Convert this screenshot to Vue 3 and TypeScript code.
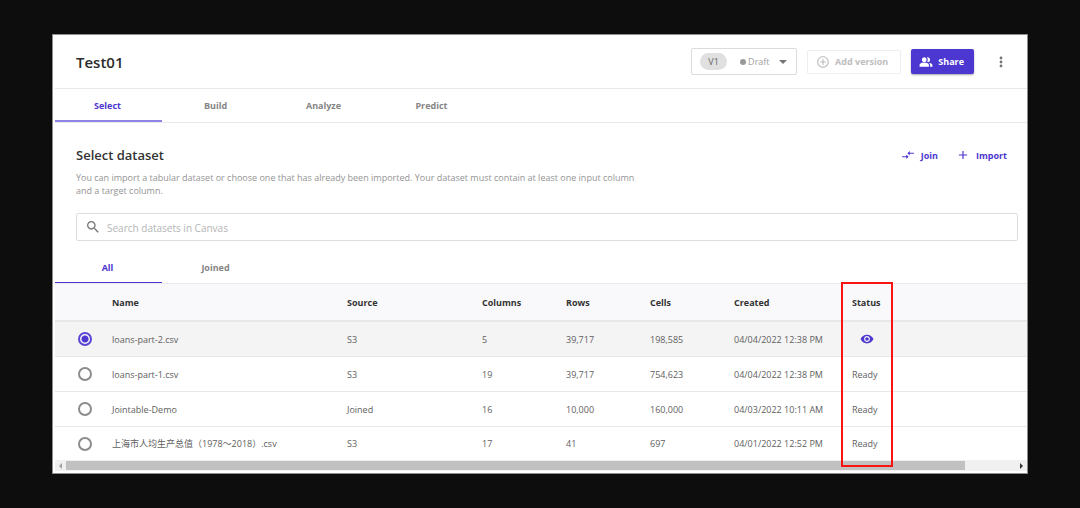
<script setup lang="ts">
import { ref } from 'vue'

interface Dataset {
  name: string
  source: string
  columns: string
  rows: string
  cells: string
  created: string
}

const steps = ['Select', 'Build', 'Analyze', 'Predict']
const filters = ['All', 'Joined']
const headings = ['Name', 'Source', 'Columns', 'Rows', 'Cells', 'Created', 'Status']

const datasets: Dataset[] = [
  { name: 'loans-part-2.csv', source: 'S3', columns: '5', rows: '39,717', cells: '198,585', created: '04/04/2022 12:38 PM' },
  { name: 'loans-part-1.csv', source: 'S3', columns: '19', rows: '39,717', cells: '754,623', created: '04/04/2022 12:38 PM' },
  { name: 'Jointable-Demo', source: 'Joined', columns: '16', rows: '10,000', cells: '160,000', created: '04/03/2022 10:11 AM' },
  { name: '上海市人均生产总值（1978～2018）.csv', source: 'S3', columns: '17', rows: '41', cells: '697', created: '04/01/2022 12:52 PM' },
]

const step = ref('Select')
const filter = ref('All')
const selected = ref('loans-part-2.csv')
const query = ref('')
</script>

<template>
  <div class="backdrop">
    <main class="panel">
      <header class="header">
        <h1>Test01</h1>
        <div class="actions">
          <button type="button" class="version">
            <span class="chip">V1</span>
            <span class="dot"></span>
            <span class="draft">Draft</span>
            <svg class="caret" viewBox="0 0 8 4"><path d="M0 0h8L4 4z" fill="currentColor" /></svg>
          </button>
          <button type="button" class="add" disabled>
            <svg class="icon" viewBox="0 0 24 24">
              <path d="M13 7h-2v4H7v2h4v4h2v-4h4v-2h-4V7zm-1-5C6.48 2 2 6.48 2 12s4.48 10 10 10 10-4.48 10-10S17.52 2 12 2zm0 18c-4.41 0-8-3.59-8-8s3.59-8 8-8 8 3.59 8 8-3.59 8-8 8z" fill="currentColor" />
            </svg>
            Add version
          </button>
          <button type="button" class="share">
            <svg class="icon" viewBox="0 0 24 24">
              <path d="M16.67 13.13C18.04 14.06 19 15.32 19 17v3h4v-3c0-2.18-3.57-3.47-6.33-3.87zM15 12c2.21 0 4-1.79 4-4s-1.79-4-4-4c-.47 0-.91.1-1.33.24C14.5 5.27 15 6.58 15 8s-.5 2.73-1.33 3.76c.42.14.86.24 1.33.24zM9 12c2.21 0 4-1.79 4-4s-1.79-4-4-4-4 1.79-4 4 1.79 4 4 4zm0 1c-2.67 0-8 1.34-8 4v3h16v-3c0-2.66-5.33-4-8-4z" fill="currentColor" />
            </svg>
            Share
          </button>
          <button type="button" class="more" aria-label="More options">
            <svg viewBox="0 0 4 12">
              <g fill="currentColor"><circle cx="2" cy="2" r="1.4" /><circle cx="2" cy="6" r="1.4" /><circle cx="2" cy="10" r="1.4" /></g>
            </svg>
          </button>
        </div>
      </header>

      <nav class="tabs">
        <button v-for="s in steps" :key="s" type="button" class="tab" :class="{ active: step === s }" @click="step = s">{{ s }}</button>
      </nav>

      <section class="intro">
        <div class="intro-top">
          <h2>Select dataset</h2>
          <div class="links">
            <button type="button" class="link">
              <svg class="icon" viewBox="0 0 24 24">
                <path d="M9.01 14H2v2h7.01v3L13 15l-3.99-4v3zm5.98-1v-3H22V8h-7.01V5L11 9l3.99 4z" fill="currentColor" />
              </svg>
              Join
            </button>
            <button type="button" class="link">
              <svg class="icon" viewBox="0 0 24 24"><path d="M19 13h-6v6h-2v-6H5v-2h6V5h2v6h6v2z" fill="currentColor" /></svg>
              Import
            </button>
          </div>
        </div>
        <p>You can import a tabular dataset or choose one that has already been imported. Your dataset must contain at least one input column and a target column.</p>
        <label class="search">
          <svg viewBox="0 0 24 24">
            <path d="M15.5 14h-.79l-.28-.27C15.41 12.59 16 11.11 16 9.5 16 5.91 13.09 3 9.5 3S3 5.91 3 9.5 5.91 16 9.5 16c1.61 0 3.09-.59 4.23-1.57l.27.28v.79l5 4.99L20.49 19l-4.99-5zm-6 0C7.01 14 5 11.99 5 9.5S7.01 5 9.5 5 14 7.01 14 9.5 11.99 14 9.5 14z" fill="currentColor" />
          </svg>
          <input v-model="query" type="text" aria-label="Search datasets" placeholder="Search datasets in Canvas" />
        </label>
      </section>

      <nav class="tabs filters">
        <button v-for="f in filters" :key="f" type="button" class="tab" :class="{ active: filter === f }" @click="filter = f">{{ f }}</button>
      </nav>

      <section class="data">
        <table>
          <colgroup>
            <col class="c-pick" /><col class="c-name" /><col class="c-source" /><col class="c-num" /><col class="c-num" /><col class="c-num" /><col class="c-created" /><col />
          </colgroup>
          <thead>
            <tr>
              <th></th>
              <th v-for="h in headings" :key="h" scope="col">{{ h }}</th>
            </tr>
          </thead>
          <tbody>
            <tr v-for="d in datasets" :key="d.name" :class="{ chosen: selected === d.name }">
              <td class="pick"><input v-model="selected" type="radio" name="dataset" :value="d.name" :aria-label="d.name" /></td>
              <td>{{ d.name }}</td>
              <td>{{ d.source }}</td>
              <td>{{ d.columns }}</td>
              <td>{{ d.rows }}</td>
              <td>{{ d.cells }}</td>
              <td>{{ d.created }}</td>
              <td>
                <button v-if="selected === d.name" type="button" class="eye" aria-label="Preview">
                  <svg viewBox="0 0 24 24">
                    <path d="M12 4.5C7 4.5 2.73 7.61 1 12c1.73 4.39 6 7.5 11 7.5s9.27-3.11 11-7.5c-1.73-4.39-6-7.5-11-7.5zM12 17c-2.76 0-5-2.24-5-5s2.24-5 5-5 5 2.24 5 5-2.24 5-5 5zm0-8c-1.66 0-3 1.34-3 3s1.34 3 3 3 3-1.34 3-3-1.34-3-3-3z" fill="currentColor" />
                  </svg>
                </button>
                <template v-else>Ready</template>
              </td>
            </tr>
          </tbody>
        </table>
        <div class="scroll">
          <svg class="arrow dim" viewBox="0 0 3 6"><path d="M3 0v6L0 3z" fill="currentColor" /></svg>
          <div class="track"><div class="thumb"></div></div>
          <svg class="arrow" viewBox="0 0 3 6"><path d="M0 0v6l3-3z" fill="currentColor" /></svg>
        </div>
        <div class="highlight"></div>
      </section>
    </main>
  </div>
</template>

<style>
body {
  background: #0d0d0d;
}
</style>

<style scoped>
* {
  box-sizing: border-box;
}
.backdrop {
  min-height: 100vh;
  padding: 34px 52px;
  background: #0d0d0d;
  border-bottom: 1px solid #050305;
  font-family: "Open Sans", "Noto Sans CJK SC", sans-serif;
  font-size: 9px;
  color: #606060;
}
.panel {
  background: #fff;
  border: 1px solid #8c8c8c;
  padding: 1px 0 2px 2px;
}
button {
  font: inherit;
  color: inherit;
  background: none;
  border: 0;
  padding: 0;
  margin: 0;
  display: flex;
  align-items: center;
}
svg {
  display: block;
  flex: none;
}
.icon {
  width: 14px;
  height: 14px;
}
.header {
  display: flex;
  align-items: center;
  justify-content: space-between;
  height: 53px;
  padding: 0 20px 0 21px;
  border-bottom: 1px solid #eaeaea;
}
h1 {
  margin: 0;
  font-size: 15px;
  font-weight: 600;
  color: #2b2b2b;
}
.actions {
  display: flex;
  align-items: center;
  padding-bottom: 1px;
}
.version {
  width: 106px;
  height: 27px;
  padding: 0 9px 0 8px;
  border: 1px solid #dcdcdc;
  border-radius: 2px;
  color: #9e9e9e;
}
.chip {
  width: 27px;
  line-height: 17px;
  border-radius: 9px;
  background: #e0e0e0;
  color: #666;
  text-align: center;
}
.dot {
  width: 6px;
  height: 6px;
  margin: 0 2px 0 13px;
  border-radius: 50%;
  background: #9a9a9a;
}
.draft {
  color: #a0a0a0;
}
.caret {
  width: 8px;
  height: 4px;
  margin-left: auto;
  color: #757575;
}
.add {
  height: 24px;
  margin-left: 10px;
  padding: 0 12px 0 8px;
  gap: 5px;
  border: 1px solid #eee;
  border-radius: 2px;
  color: #bdbdbd;
  font-weight: 700;
}
.share {
  height: 25px;
  margin-left: 10px;
  padding: 0 10px 0 8px;
  gap: 5px;
  border-radius: 2px;
  background: #4c37d0;
  color: #fff;
  font-weight: 700;
  box-shadow: 0 1px 2px rgba(0, 0, 0, 0.35);
}
.more {
  width: 12px;
  height: 24px;
  margin-left: 21px;
  justify-content: center;
  color: #757575;
}
.more svg {
  width: 4px;
  height: 12px;
}
.tabs {
  display: flex;
  height: 34px;
  border-bottom: 1px solid #eaeaea;
}
.tab {
  width: 107px;
  margin-right: 1px;
  padding: 2px 2px 0 0;
  justify-content: center;
  border-bottom: 2px solid transparent;
  font-weight: 700;
  color: #858585;
}
.tab.active {
  color: #4c37d0;
  border-bottom-color: #8f84e4;
}
.filters .tab {
  border-bottom-width: 1px;
}
.filters .tab.active {
  border-bottom-color: #4c37d0;
}
.intro {
  padding: 22px 9px 9px 21px;
}
.intro-top {
  display: flex;
  justify-content: space-between;
  align-items: center;
  height: 19px;
}
h2 {
  margin: 0;
  font-size: 13px;
  font-weight: 600;
  color: #333;
}
.links {
  display: flex;
  gap: 18px;
  padding: 1px 11px 0 0;
}
.link {
  gap: 6px;
  color: #4c37d0;
  font-weight: 700;
}
p {
  margin: 7px 0 16px;
  max-width: 560px;
  line-height: 13px;
  color: #949494;
}
.search {
  display: flex;
  align-items: center;
  height: 28px;
  padding: 0 9px 0 8px;
  gap: 6px;
  border: 1px solid #dedede;
  border-radius: 2px;
  color: #757575;
}
.search svg {
  width: 16px;
  height: 16px;
}
.search input {
  flex: 1;
  border: 0;
  outline: 0;
  padding: 2px 0 0;
  background: none;
  font: inherit;
  font-size: 10px;
  color: #444;
}
.search input::placeholder {
  color: #b5b5b5;
  opacity: 1;
}
.data {
  position: relative;
}
table {
  width: 100%;
  table-layout: fixed;
  border-collapse: separate;
  border-spacing: 0;
}
.c-pick { width: 57px; }
.c-name { width: 235px; }
.c-source { width: 135px; }
.c-num { width: 84px; }
.c-created { width: 118px; }
th,
td {
  padding: 0;
  text-align: left;
  white-space: nowrap;
  height: 35px;
  border-bottom: 1px solid #e8e8e8;
}
th {
  height: 38px;
  background: #f9f9fb;
  border-bottom: 2px solid #e8e8ea;
  font-weight: 700;
  color: #333;
}
tbody tr:last-child td {
  height: 33px;
  border-bottom: 0;
}
.chosen td {
  background: #f4f4f4;
}
.pick input {
  appearance: none;
  display: block;
  width: 14px;
  height: 14px;
  margin: 0 0 0 23px;
  border: 2px solid #8c8c8c;
  border-radius: 50%;
}
.pick input:checked {
  border-color: #5a47d5;
  background: radial-gradient(circle, #4c37d0 3px, transparent 4px);
}
.eye {
  margin-left: 8px;
  color: #4c37d0;
}
.eye svg {
  width: 14px;
  height: 14px;
}
.scroll {
  display: flex;
  align-items: center;
  height: 11px;
  padding: 0 4px;
  gap: 4px;
  background: #f0f0f0;
}
.arrow {
  width: 3px;
  height: 6px;
  color: #333;
}
.arrow.dim {
  color: #a0a0a0;
}
.track {
  flex: 1;
  margin-right: 4px;
}
.thumb {
  width: 95%;
  height: 9px;
  background: #c1c1c1;
}
.highlight {
  position: absolute;
  top: -2px;
  left: 786px;
  width: 52px;
  height: 185px;
  border: 2px solid #f91414;
  pointer-events: none;
}
</style>
